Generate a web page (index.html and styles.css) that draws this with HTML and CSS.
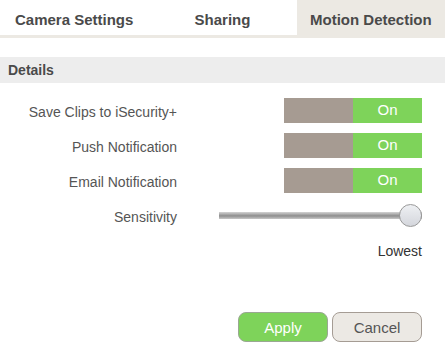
FILE: index.html
```html
<!DOCTYPE html>
<html lang="en">
<head>
    <meta charset="UTF-8">
    <meta name="viewport" content="width=device-width, initial-scale=1.0">
    <title>Motion Detection</title>
    <link rel="stylesheet" href="styles.css">
</head>
<body>
    <nav class="tabs">
        <div class="tab">Camera Settings</div>
        <div class="tab">Sharing</div>
        <div class="tab active">Motion Detection</div>
    </nav>

    <div class="section-title">Details</div>

    <div class="settings">
        <div class="row">
            <span class="label">Save Clips to iSecurity+</span>
            <div class="toggle"><span class="off"></span><span class="on">On</span></div>
        </div>
        <div class="row">
            <span class="label">Push Notification</span>
            <div class="toggle"><span class="off"></span><span class="on">On</span></div>
        </div>
        <div class="row">
            <span class="label">Email Notification</span>
            <div class="toggle"><span class="off"></span><span class="on">On</span></div>
        </div>
        <div class="row slider-row">
            <span class="label">Sensitivity</span>
            <div class="slider">
                <div class="track"></div>
                <div class="thumb"></div>
            </div>
        </div>
        <div class="level">Lowest</div>
    </div>

    <div class="actions">
        <button class="btn apply">Apply</button>
        <button class="btn cancel">Cancel</button>
    </div>
</body>
</html>
```
FILE: styles.css
```css
body {
    font-family: "Liberation Sans", Arial, sans-serif;
    margin: 0;
    padding: 0;
    background-color: #fff;
    color: #555;
    width: 445px;
}
.tabs {
    display: grid;
    grid-template-columns: 1fr 1fr 1fr;
    height: 35px;
    border-bottom: 3px solid #ece9e3;
}
.tab {
    display: flex;
    justify-content: center;
    align-items: center;
    font-size: 15px;
    font-weight: bold;
    color: #4a4a4a;
    padding-top: 4px;
}
.tab.active {
    background-color: #ece9e3;
}
.section-title {
    margin-top: 19px;
    height: 26px;
    line-height: 26px;
    background-color: #ededed;
    font-size: 14px;
    font-weight: bold;
    color: #4a4a4a;
    padding-left: 8px;
}
.settings {
    padding-top: 15px;
}
.row {
    display: flex;
    align-items: center;
    height: 25px;
    margin-bottom: 10px;
}
.label {
    width: 177px;
    text-align: right;
    font-size: 14px;
    color: #555;
    padding-top: 2px;
}
.toggle {
    display: flex;
    margin-left: 107px;
    width: 138px;
    height: 25px;
}
.toggle .off {
    flex: 1;
    background-color: #a69b92;
}
.toggle .on {
    flex: 1;
    background-color: #7ed35a;
    color: #fff;
    font-size: 15px;
    text-align: center;
    line-height: 23px;
}
.slider-row {
    height: 25px;
    margin-top: 9px;
}
.slider {
    position: relative;
    margin-left: 42px;
    width: 203px;
    height: 25px;
    display: flex;
    align-items: center;
}
.track {
    width: 100%;
    height: 7px;
    background: linear-gradient(#d4d4d4, #8e8e8e 55%, #c8c8c8);
}
.thumb {
    position: absolute;
    right: 0;
    top: 1px;
    width: 21px;
    height: 21px;
    border-radius: 50%;
    border: 1px solid #999;
    background: linear-gradient(#eef0f3, #d4d6dc);
}
.level {
    text-align: right;
    padding-right: 23px;
    font-size: 14px;
    color: #333;
    margin-top: 15px;
}
.actions {
    display: flex;
    justify-content: flex-end;
    gap: 4px;
    padding-right: 23px;
    margin-top: 53px;
}
.btn {
    width: 90px;
    height: 30px;
    border-radius: 8px;
    font-family: "Liberation Sans", Arial, sans-serif;
    font-size: 15px;
    padding: 0;
}
.apply {
    background-color: #7ed35a;
    border: 1px solid #9aa892;
    color: #fff;
}
.cancel {
    background-color: #ece9e4;
    border: 1px solid #a59c94;
    color: #555;
}
```
